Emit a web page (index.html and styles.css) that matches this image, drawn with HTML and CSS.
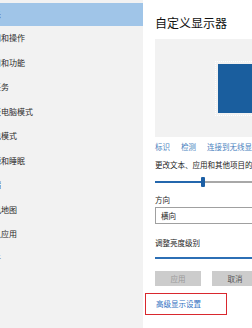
FILE: index.html
```html
<!DOCTYPE html>
<html lang="zh-CN">
<head>
    <meta charset="UTF-8" />
    <title>显示设置</title>
    <link rel="stylesheet" href="styles.css">
</head>
<body>

<div class="page">
    <!-- 左侧菜单 -->
    <div class="sidebar">
        <div class="nav-item active">显示</div>
        <div class="nav-item">通知和操作</div>
        <div class="nav-item">应用和功能</div>
        <div class="nav-item">多任务</div>
        <div class="nav-item">平板电脑模式</div>
        <div class="nav-item">节电模式</div>
        <div class="nav-item">电源和睡眠</div>
        <div class="nav-item">存储</div>
        <div class="nav-item">脱机地图</div>
        <div class="nav-item">默认应用</div>
        <div class="nav-item">关于</div>
    </div>

    <!-- 右侧内容 -->
    <div class="content">
        <div class="inner">
            <div class="title">自定义显示器</div>

            <div class="preview">
                <div class="monitor"></div>
            </div>

            <div class="links">
                <a>标识</a>
                <a>检测</a>
                <a>连接到无线显示器</a>
            </div>

            <div class="label scale-label">更改文本、应用和其他项目的大小: 100%</div>
            <div class="slider">
                <div class="track-on"></div>
                <div class="thumb"></div>
                <div class="track-off"></div>
            </div>

            <div class="label dir-label">方向</div>
            <div class="select">横向</div>

            <div class="label bright-label">调整亮度级别</div>
            <div class="bright-line"></div>

            <div class="buttons">
                <div class="btn disabled">应用</div>
                <div class="btn">取消</div>
            </div>

            <div class="advanced">
                <a>高级显示设置</a>
            </div>
        </div>
    </div>
</div>

</body>
</html>
```

FILE: styles.css
```css
body {
    margin: 0;
    font-family: "Noto Sans CJK SC", "Noto Sans", sans-serif;
    background: #fff;
}
.page {
    display: flex;
    width: 252px;
    height: 328px;
    overflow: hidden;
}

/* 左侧菜单 */
.sidebar {
    width: 143px;
    flex-shrink: 0;
    background: #f2f2f2;
    padding-top: 3px;
    overflow: hidden;
}
.nav-item {
    height: 24.5px;
    line-height: 24.5px;
    font-size: 8px;
    color: #2a2a2a;
    text-indent: -15px;
    white-space: nowrap;
}
.nav-item.active {
    height: 23px;
    line-height: 23px;
    background: #a0c5e8;
}

/* 右侧内容 */
.content {
    flex: 1;
    overflow: hidden;
    background: #fff;
}
.inner {
    width: 220px;
    padding-left: 12px;
    font-size: 7.5px;
    color: #222;
}
.title {
    margin-top: 16px;
    font-size: 12px;
    line-height: 14px;
    color: #111;
    white-space: nowrap;
}
.preview {
    margin-top: 9px;
    height: 98px;
    background: #f2f2f2;
    padding-top: 25px;
    padding-left: 63px;
    box-sizing: border-box;
}
.monitor {
    height: 49px;
    background: #1a5e9e;
    outline: 1px dotted #fff;
    outline-offset: 2px;
}
.links {
    margin-top: 5px;
    line-height: 10px;
    display: flex;
    gap: 11px;
    white-space: nowrap;
}
.links a {
    color: #4a82c0;
}
.label {
    line-height: 10px;
    white-space: nowrap;
}
.scale-label {
    margin-top: 8px;
}
.slider {
    margin-top: 7px;
    height: 10px;
    display: flex;
    align-items: center;
}
.track-on {
    width: 46px;
    height: 2px;
    background: #2467ad;
}
.thumb {
    width: 4px;
    height: 10px;
    border-radius: 1px;
    background: #1d5fa5;
}
.track-off {
    flex: 1;
    height: 2px;
    background: #a8a8a8;
}
.dir-label {
    margin-top: 8px;
}
.select {
    margin-top: 2px;
    height: 17px;
    line-height: 15px;
    box-sizing: border-box;
    border: 1px solid #a0a0a0;
    padding-left: 5px;
}
.bright-label {
    margin-top: 14px;
}
.bright-line {
    margin-top: 9px;
    height: 2px;
    background: #2c6fb5;
}
.buttons {
    margin-top: 12px;
    display: flex;
    gap: 11px;
}
.btn {
    width: 46px;
    height: 15px;
    line-height: 15px;
    text-align: center;
    background: #cccccc;
    color: #555;
}
.btn.disabled {
    color: #9a9a9a;
}
.advanced {
    margin-top: 7px;
    margin-left: -10px;
    width: 82px;
    height: 22px;
    line-height: 20px;
    box-sizing: border-box;
    border: 1.5px solid #d9282e;
    padding-left: 10px;
}
.advanced a {
    color: #2f6fbf;
}
```
